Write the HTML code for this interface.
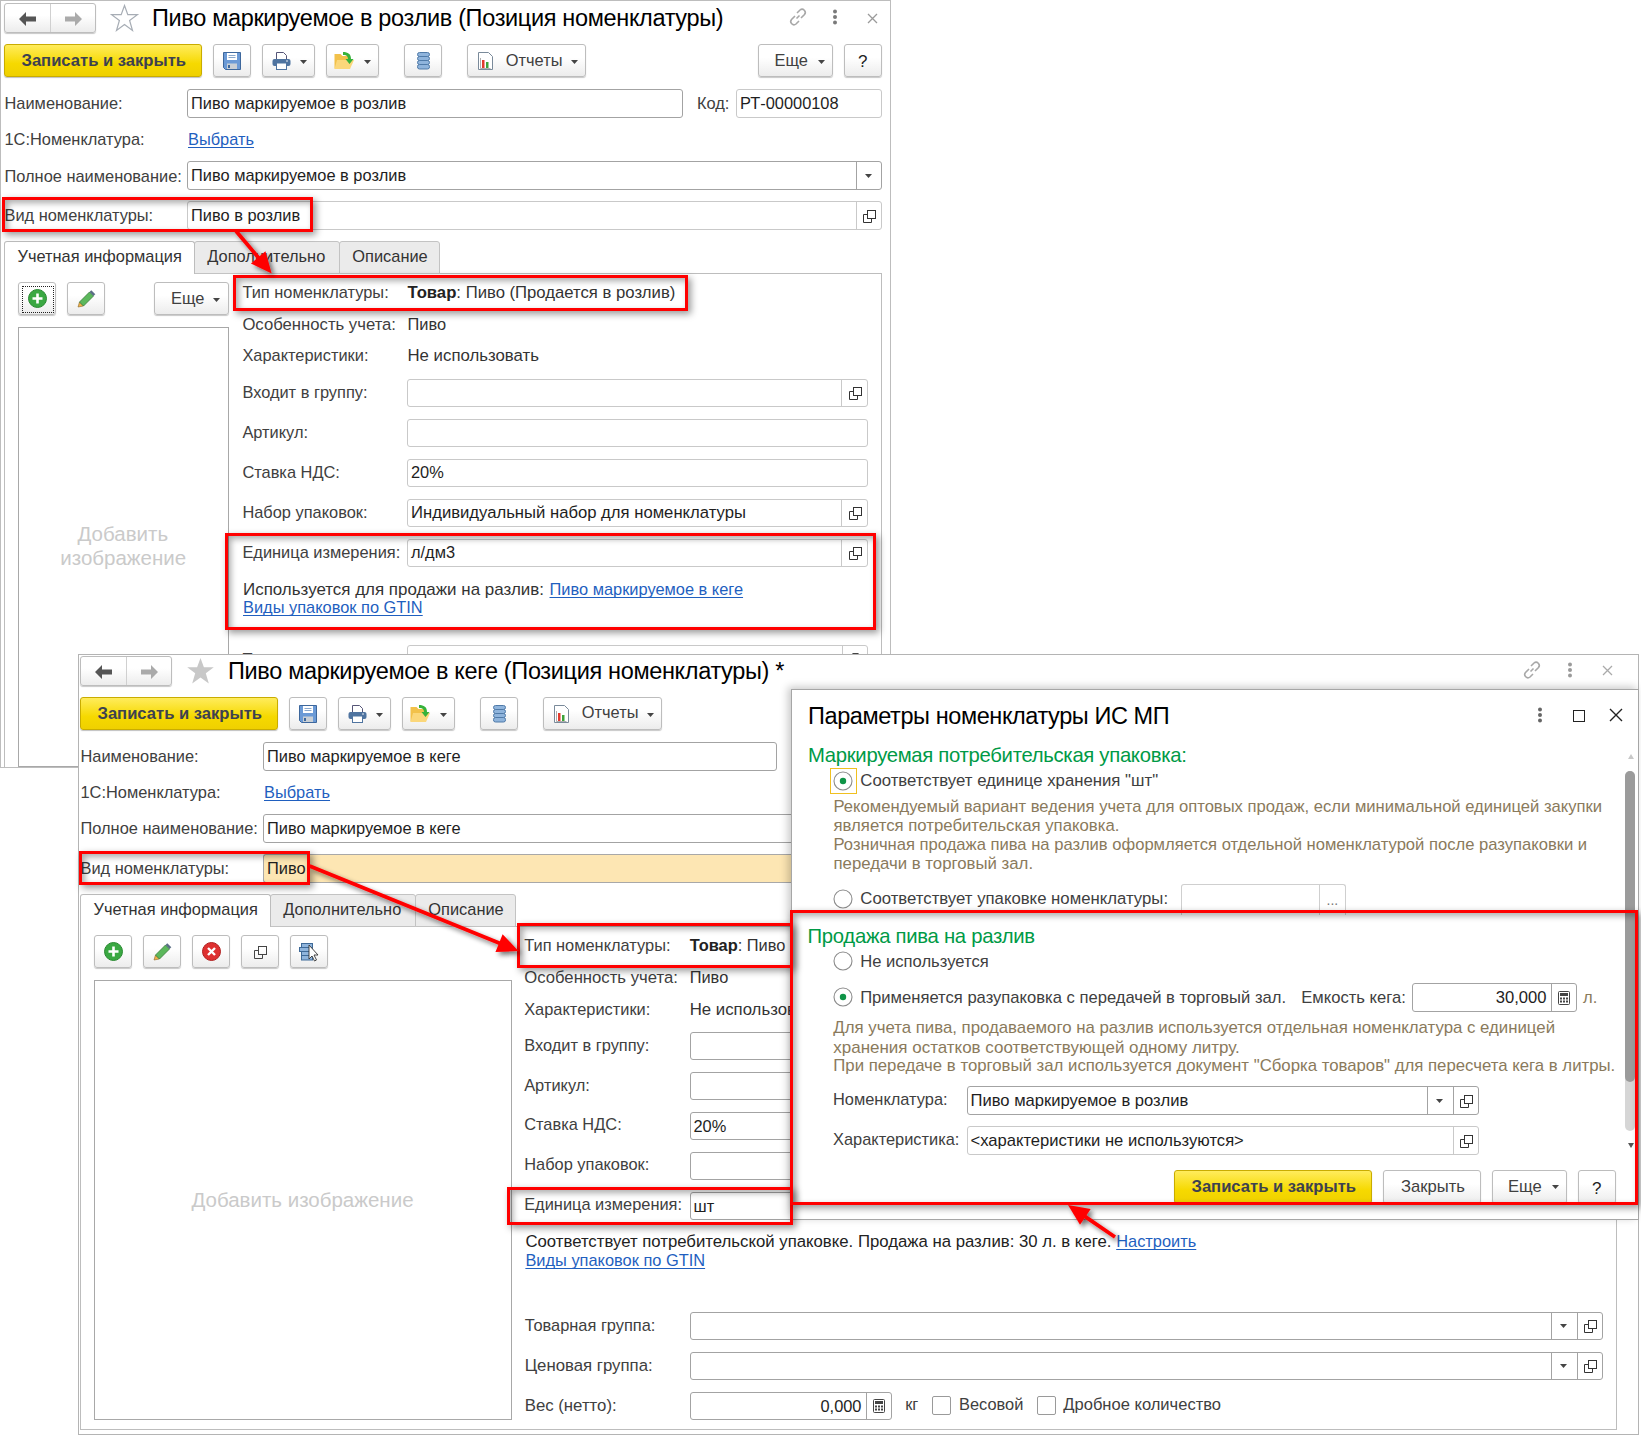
<!DOCTYPE html>
<html><head><meta charset="utf-8"><style>
html,body{margin:0;padding:0;background:#fff}
body{width:1641px;height:1438px;position:relative;overflow:hidden;font-family:"Liberation Sans",sans-serif}
.t{position:absolute;white-space:nowrap;line-height:1}
.b{position:absolute}
.i{position:absolute;overflow:visible}
.rb{position:absolute;box-sizing:border-box;border:3px solid #ff0000;box-shadow:3px 3px 7px rgba(0,0,0,.4), inset 3px 3px 6px rgba(0,0,0,.33)}
</style></head><body>
<div class="b" style="left:0;top:0;width:891px;height:768px;border:1px solid #bdbdbd;box-sizing:border-box;background:#fff"></div>
<div class="b" style="left:4px;top:3px;width:92px;height:30px;border:1px solid #bdbdbd;background:linear-gradient(#ffffff 40%,#ececec);box-shadow:0 1px 1px rgba(0,0,0,.22);border-radius:3px;box-sizing:border-box;"></div>
<div class="b" style="left:50px;top:4px;width:1px;height:28px;background:#d0d0d0"></div>
<svg class="i" style="left:19px;top:12px" width="18" height="14" viewBox="0 0 18 14"><path d="M0 7L7 0v4.5h10v5H7V14z" fill="#555"/></svg>
<svg class="i" style="left:64px;top:12px" width="18" height="14" viewBox="0 0 18 14"><path d="M18 7L11 0v4.5H1v5h10V14z" fill="#aaa"/></svg>
<svg class="i" style="left:110px;top:4px" width="29" height="28" viewBox="0 0 29 28"><path d="M14.5 1.5l3.3 9.2h9.6l-7.8 5.8 2.9 10-8-5.9-8 5.9 2.9-10-7.8-5.8h9.6z" fill="none" stroke="#a7adb5" stroke-width="1.2"/></svg>
<div class="t" style="left:152px;top:7px;font-size:23.5px;color:#000;font-weight:400;letter-spacing:-0.34px">Пиво маркируемое в розлив (Позиция номенклатуры)</div>
<svg class="i" style="left:788px;top:7px" width="20" height="20" viewBox="0 0 20 20"><g fill="none" stroke="#a8a8a8" stroke-width="1.6"><path d="M8.5 11.5l3-3"/><path d="M7 9l-3.5 3.5a3.2 3.2 0 0 0 4.5 4.5L11 14"/><path d="M13 11l3.5-3.5a3.2 3.2 0 0 0-4.5-4.5L9 6"/></g></svg>
<svg class="i" style="left:832px;top:9px" width="6" height="16" viewBox="0 0 6 16"><g fill="#7a7a7a"><circle cx="3" cy="2.5" r="2"/><circle cx="3" cy="8" r="2"/><circle cx="3" cy="13.5" r="2"/></g></svg>
<svg class="i" style="left:867px;top:12.5px" width="11" height="11" viewBox="0 0 11 11"><path d="M1 1l9 9M10 1l-9 9" stroke="#9a9a9a" stroke-width="1.3"/></svg>
<div class="b" style="left:4px;top:44px;width:198px;height:33px;border:1px solid #c9ac00;background:linear-gradient(#ffec5c,#f6d900 60%,#efd000);box-shadow:0 1px 1px rgba(0,0,0,.25);border-radius:3px;box-sizing:border-box;"></div>
<div class="t" style="left:21.5px;top:53px;font-size:16.6px;color:#3d4150;font-weight:700;">Записать и закрыть</div>
<div class="b" style="left:213px;top:44px;width:38px;height:33px;border:1px solid #bdbdbd;background:linear-gradient(#ffffff 40%,#ececec);box-shadow:0 1px 1px rgba(0,0,0,.22);border-radius:3px;box-sizing:border-box;"></div>
<svg class="i" style="left:223px;top:52px" width="18" height="18" viewBox="0 0 18 18"><path d="M0.5 0.5h17v17H2.5l-2-2z" fill="#6b9ad6" stroke="#3d679c"/><rect x="4" y="1" width="10" height="7" fill="#fff"/><path d="M5.5 3.5h7M5.5 5.5h7" stroke="#8aa8cc"/><rect x="4" y="11.5" width="10" height="5.5" fill="#c9cfd5"/><rect x="5" y="13" width="2" height="3" fill="#3d679c"/></svg>
<div class="b" style="left:262px;top:44px;width:53px;height:33px;border:1px solid #bdbdbd;background:linear-gradient(#ffffff 40%,#ececec);box-shadow:0 1px 1px rgba(0,0,0,.22);border-radius:3px;box-sizing:border-box;"></div>
<svg class="i" style="left:272px;top:52px" width="19" height="18" viewBox="0 0 19 18"><path d="M4.5 0.5h7l3 3v4h-10z" fill="#fff" stroke="#557"/><rect x="0.5" y="7" width="18" height="7" rx="2" fill="#4f74a0"/><rect x="4.5" y="11" width="10" height="6.5" fill="#fff" stroke="#4f74a0"/><circle cx="15" cy="9" r="0.8" fill="#fff"/></svg>
<svg class="i" style="left:300.0px;top:59.5px" width="7" height="4" viewBox="0 0 7 4"><path d="M0 0h7L3.5 4z" fill="#444"/></svg>
<div class="b" style="left:326px;top:44px;width:53px;height:33px;border:1px solid #bdbdbd;background:linear-gradient(#ffffff 40%,#ececec);box-shadow:0 1px 1px rgba(0,0,0,.22);border-radius:3px;box-sizing:border-box;"></div>
<svg class="i" style="left:334px;top:51px" width="21" height="20" viewBox="0 0 21 20"><path d="M0.5 3h6l2 2h7v12.5H0.5z" fill="#f2c14a"/><path d="M3 9h17l-4 9H0.5z" fill="#fbd77a"/><path d="M9 1c5 0 8 2 8 7h2.5l-4 5-4-5H14c0-3-2-4.5-5-4z" fill="#37b23a"/></svg>
<svg class="i" style="left:363.5px;top:59.5px" width="7" height="4" viewBox="0 0 7 4"><path d="M0 0h7L3.5 4z" fill="#444"/></svg>
<div class="b" style="left:404px;top:44px;width:38px;height:33px;border:1px solid #bdbdbd;background:linear-gradient(#ffffff 40%,#ececec);box-shadow:0 1px 1px rgba(0,0,0,.22);border-radius:3px;box-sizing:border-box;"></div>
<svg class="i" style="left:417px;top:52px" width="13" height="18" viewBox="0 0 13 18"><g fill="#8fb4dc" stroke="#4f7aa8"><rect x="0.5" y="0.5" width="12" height="4" rx="2"/><rect x="0.5" y="4.5" width="12" height="4" rx="2"/><rect x="0.5" y="8.5" width="12" height="4" rx="2"/><rect x="0.5" y="12.5" width="12" height="4.5" rx="2"/></g></svg>
<div class="b" style="left:467px;top:44px;width:119px;height:33px;border:1px solid #bdbdbd;background:linear-gradient(#ffffff 40%,#ececec);box-shadow:0 1px 1px rgba(0,0,0,.22);border-radius:3px;box-sizing:border-box;"></div>
<svg class="i" style="left:478px;top:52px" width="15" height="18" viewBox="0 0 15 18"><path d="M0.5 0.5h10l4 4v13h-14z" fill="#fff" stroke="#7a8a9a"/><rect x="4" y="8" width="2.5" height="8" fill="#e23b2e"/><rect x="8" y="10" width="2.5" height="6" fill="#3da33a"/><path d="M2.5 6v10.5h10" fill="none" stroke="#999" stroke-width="0.8"/></svg>
<div class="t" style="left:505.8px;top:52px;font-size:16.4px;color:#404040;font-weight:400;">Отчеты</div>
<svg class="i" style="left:571.0px;top:59.5px" width="7" height="4" viewBox="0 0 7 4"><path d="M0 0h7L3.5 4z" fill="#444"/></svg>
<div class="b" style="left:758px;top:44px;width:75px;height:33px;border:1px solid #bdbdbd;background:linear-gradient(#ffffff 40%,#ececec);box-shadow:0 1px 1px rgba(0,0,0,.22);border-radius:3px;box-sizing:border-box;"></div>
<div class="t" style="left:774.5px;top:52px;font-size:16.4px;color:#404040;font-weight:400;">Еще</div>
<svg class="i" style="left:817.5px;top:59.5px" width="7" height="4" viewBox="0 0 7 4"><path d="M0 0h7L3.5 4z" fill="#444"/></svg>
<div class="b" style="left:844px;top:44px;width:38px;height:33px;border:1px solid #bdbdbd;background:linear-gradient(#ffffff 40%,#ececec);box-shadow:0 1px 1px rgba(0,0,0,.22);border-radius:3px;box-sizing:border-box;"></div>
<div class="t" style="left:858px;top:53px;font-size:17px;color:#222;font-weight:400;">?</div>
<div class="t" style="left:4.5px;top:95px;font-size:16.4px;color:#404040;font-weight:400;">Наименование:</div>
<div class="b" style="left:187px;top:89px;width:496px;height:29px;border:1px solid #a3a3a3;border-radius:3px;background:#fff;box-sizing:border-box"></div>
<div class="t" style="left:191px;top:95px;font-size:16.4px;color:#1e1e1e;font-weight:400;">Пиво маркируемое в розлив</div>
<div class="t" style="left:697px;top:95px;font-size:16.4px;color:#404040;font-weight:400;">Код:</div>
<div class="b" style="left:736px;top:89px;width:146px;height:29px;border:1px solid #c9c9c9;border-radius:3px;background:#fff;box-sizing:border-box"></div>
<div class="t" style="left:740px;top:95px;font-size:16.4px;color:#1e1e1e;font-weight:400;">РТ-00000108</div>
<div class="t" style="left:4.5px;top:131px;font-size:16.4px;color:#404040;font-weight:400;">1С:Номенклатура:</div>
<div class="t" style="left:188px;top:131px;font-size:16.4px;color:#1f5fbf;font-weight:400;text-decoration:underline;text-decoration-skip-ink:none;text-underline-offset:1.5px">Выбрать</div>
<div class="t" style="left:4.5px;top:168px;font-size:16.4px;color:#404040;font-weight:400;">Полное наименование:</div>
<div class="b" style="left:187px;top:161px;width:695px;height:29px;border:1px solid #a3a3a3;border-radius:3px;background:#fff;box-sizing:border-box"></div>
<div class="b" style="left:855.5px;top:162px;width:1.0px;height:27px;background:#a3a3a3"></div>
<svg class="i" style="left:865.25px;top:173.5px" width="7" height="4" viewBox="0 0 7 4"><path d="M0 0h7L3.5 4z" fill="#444"/></svg>
<div class="t" style="left:191px;top:167px;font-size:16.4px;color:#1e1e1e;font-weight:400;">Пиво маркируемое в розлив</div>
<div class="t" style="left:4.5px;top:207px;font-size:16.4px;color:#404040;font-weight:400;">Вид номенклатуры:</div>
<div class="b" style="left:187px;top:201px;width:695px;height:29px;border:1px solid #c9c9c9;border-radius:3px;background:#fff;box-sizing:border-box"></div>
<div class="b" style="left:855.5px;top:202px;width:1.0px;height:27px;background:#c9c9c9"></div>
<svg class="i" style="left:862.75px;top:209.5px" width="13" height="13" viewBox="0 0 13 13"><path d="M4.5 4.5h8v-8" fill="none"/><rect x="4.5" y="0.5" width="8" height="8" fill="none" stroke="#333"/><path d="M4.5 4.5H0.5v8h8V8.5" fill="none" stroke="#333"/></svg>
<div class="t" style="left:191px;top:207px;font-size:16.4px;color:#1e1e1e;font-weight:400;">Пиво в розлив</div>
<div class="b" style="left:4px;top:273px;width:878px;height:495px;border:1px solid #bdbdbd;box-sizing:border-box;background:#fff"></div>
<div class="b" style="left:194px;top:241px;width:146px;height:33px;border:1px solid #c3c3c3;border-radius:3px 3px 0 0;background:#ebebeb;box-sizing:border-box"></div>
<div class="b" style="left:339px;top:241px;width:101px;height:33px;border:1px solid #c3c3c3;border-radius:3px 3px 0 0;background:#ebebeb;box-sizing:border-box"></div>
<div class="b" style="left:4px;top:241px;width:191px;height:33px;border:1px solid #bdbdbd;border-bottom:none;border-radius:3px 3px 0 0;background:#fff;box-sizing:border-box"></div>
<div class="t" style="left:17.5px;top:248px;font-size:16.4px;color:#333;font-weight:400;">Учетная информация</div>
<div class="t" style="left:207.3px;top:248px;font-size:16.4px;color:#333;font-weight:400;">Дополнительно</div>
<div class="t" style="left:352.3px;top:248px;font-size:16.4px;color:#333;font-weight:400;">Описание</div>
<div class="b" style="left:18px;top:282px;width:38px;height:33px;border:1px solid #bdbdbd;background:linear-gradient(#ffffff 40%,#ececec);box-shadow:0 1px 1px rgba(0,0,0,.22);border-radius:3px;box-sizing:border-box;"></div>
<div class="b" style="left:22px;top:286px;width:30px;height:25px;border:1px dotted #222"></div>
<svg class="i" style="left:27.5px;top:289.0px" width="19" height="19" viewBox="0 0 19 19"><circle cx="9.5" cy="9.5" r="9" fill="#3aa842" stroke="#2a8a32"/><path d="M9.5 4.5v10M4.5 9.5h10" stroke="#fff" stroke-width="2.6"/></svg>
<div class="b" style="left:67px;top:282px;width:38px;height:33px;border:1px solid #bdbdbd;background:linear-gradient(#ffffff 40%,#ececec);box-shadow:0 1px 1px rgba(0,0,0,.22);border-radius:3px;box-sizing:border-box;"></div>
<svg class="i" style="left:77px;top:289.5px" width="18" height="18" viewBox="0 0 18 18"><path d="M1 17l1.5-5 4 4z" fill="#f0b04a" stroke="#8a6a2a" stroke-width="0.6"/><path d="M2.5 12L12.5 2l4 4-10 10z" fill="#5cb85c" stroke="#3a7a3a" stroke-width="0.8"/><path d="M12.5 2l1.8-1.8 4 4L16.5 6z" fill="#5a6e85"/></svg>
<div class="b" style="left:154px;top:282px;width:75px;height:33px;border:1px solid #bdbdbd;background:linear-gradient(#ffffff 40%,#ececec);box-shadow:0 1px 1px rgba(0,0,0,.22);border-radius:3px;box-sizing:border-box;"></div>
<div class="t" style="left:171px;top:290px;font-size:16.4px;color:#404040;font-weight:400;">Еще</div>
<svg class="i" style="left:213.0px;top:297.5px" width="7" height="4" viewBox="0 0 7 4"><path d="M0 0h7L3.5 4z" fill="#444"/></svg>
<div class="b" style="left:18px;top:327px;width:211px;height:440px;border:1px solid #a8a8a8;box-sizing:border-box;background:#fff"></div>
<div class="t" style="left:77.5px;top:524px;font-size:20.5px;color:#cacaca;font-weight:400;">Добавить</div>
<div class="t" style="left:60.3px;top:548px;font-size:20.5px;color:#cacaca;font-weight:400;">изображение</div>
<div class="t" style="left:242.4px;top:284px;font-size:16.4px;color:#404040;font-weight:400;">Тип номенклатуры:</div>
<div class="t" style="left:407.5px;top:285px;font-size:16.7px;color:#333;font-weight:400;"><b style='color:#222'>Товар</b>: Пиво (Продается в розлив)</div>
<div class="t" style="left:242.4px;top:317px;font-size:16.7px;color:#404040;font-weight:400;">Особенность учета:</div>
<div class="t" style="left:407.5px;top:316px;font-size:16.4px;color:#333;font-weight:400;">Пиво</div>
<div class="t" style="left:242.4px;top:347px;font-size:16.4px;color:#404040;font-weight:400;">Характеристики:</div>
<div class="t" style="left:407.5px;top:348px;font-size:16.8px;color:#333;font-weight:400;">Не использовать</div>
<div class="t" style="left:242.4px;top:384px;font-size:16.4px;color:#404040;font-weight:400;">Входит в группу:</div>
<div class="b" style="left:407px;top:378.5px;width:461px;height:28.5px;border:1px solid #c9c9c9;border-radius:3px;background:#fff;box-sizing:border-box"></div>
<div class="b" style="left:841px;top:379.5px;width:1px;height:26.5px;background:#c9c9c9"></div>
<svg class="i" style="left:848.5px;top:386.75px" width="13" height="13" viewBox="0 0 13 13"><path d="M4.5 4.5h8v-8" fill="none"/><rect x="4.5" y="0.5" width="8" height="8" fill="none" stroke="#333"/><path d="M4.5 4.5H0.5v8h8V8.5" fill="none" stroke="#333"/></svg>
<div class="t" style="left:242.4px;top:424px;font-size:16.4px;color:#404040;font-weight:400;">Артикул:</div>
<div class="b" style="left:407px;top:418.5px;width:461px;height:28.5px;border:1px solid #c9c9c9;border-radius:3px;background:#fff;box-sizing:border-box"></div>
<div class="t" style="left:242.4px;top:464px;font-size:16.4px;color:#404040;font-weight:400;">Ставка НДС:</div>
<div class="b" style="left:407px;top:458.5px;width:461px;height:28.5px;border:1px solid #c9c9c9;border-radius:3px;background:#fff;box-sizing:border-box"></div>
<div class="t" style="left:411px;top:464px;font-size:16.4px;color:#1e1e1e;font-weight:400;">20%</div>
<div class="t" style="left:242.4px;top:504px;font-size:16.4px;color:#404040;font-weight:400;">Набор упаковок:</div>
<div class="b" style="left:407px;top:498.5px;width:461px;height:28.5px;border:1px solid #c9c9c9;border-radius:3px;background:#fff;box-sizing:border-box"></div>
<div class="b" style="left:841px;top:499.5px;width:1px;height:26.5px;background:#c9c9c9"></div>
<svg class="i" style="left:848.5px;top:506.75px" width="13" height="13" viewBox="0 0 13 13"><path d="M4.5 4.5h8v-8" fill="none"/><rect x="4.5" y="0.5" width="8" height="8" fill="none" stroke="#333"/><path d="M4.5 4.5H0.5v8h8V8.5" fill="none" stroke="#333"/></svg>
<div class="t" style="left:411px;top:505px;font-size:16.66px;color:#1e1e1e;font-weight:400;">Индивидуальный набор для номенклатуры</div>
<div class="t" style="left:242.4px;top:544px;font-size:16.4px;color:#404040;font-weight:400;">Единица измерения:</div>
<div class="b" style="left:407px;top:538.5px;width:461px;height:28.5px;border:1px solid #c9c9c9;border-radius:3px;background:#fff;box-sizing:border-box"></div>
<div class="b" style="left:841px;top:539.5px;width:1px;height:26.5px;background:#c9c9c9"></div>
<svg class="i" style="left:848.5px;top:546.75px" width="13" height="13" viewBox="0 0 13 13"><path d="M4.5 4.5h8v-8" fill="none"/><rect x="4.5" y="0.5" width="8" height="8" fill="none" stroke="#333"/><path d="M4.5 4.5H0.5v8h8V8.5" fill="none" stroke="#333"/></svg>
<div class="t" style="left:411px;top:544px;font-size:16.4px;color:#1e1e1e;font-weight:400;">л/дм3</div>
<div class="t" style="left:243px;top:582px;font-size:16.95px;color:#333;font-weight:400;">Используется для продажи на разлив:</div>
<div class="t" style="left:549.5px;top:581px;font-size:16.4px;color:#1f5fbf;font-weight:400;text-decoration:underline;text-decoration-skip-ink:none;text-underline-offset:1.5px">Пиво маркируемое в кеге</div>
<div class="t" style="left:243px;top:599px;font-size:16.4px;color:#1f5fbf;font-weight:400;text-decoration:underline;text-decoration-skip-ink:none;text-underline-offset:1.5px">Виды упаковок по GTIN</div>
<div class="b" style="left:407px;top:645px;width:461px;height:35px;border:1px solid #c9c9c9;border-radius:3px;background:#fff;box-sizing:border-box"></div>
<div class="b" style="left:842px;top:646px;width:1px;height:33px;background:#c9c9c9"></div>
<svg class="i" style="left:852.0px;top:653px" width="7" height="4" viewBox="0 0 7 4"><path d="M0 0h7L3.5 4z" fill="#444"/></svg>
<div class="t" style="left:242.4px;top:651px;font-size:16.4px;color:#404040;font-weight:400;">Товарная группа:</div>
<div class="b" style="left:78px;top:654px;width:1561px;height:781px;border:1px solid #b4b4b4;box-sizing:border-box;background:#fff"></div>
<div class="b" style="left:80px;top:656px;width:92px;height:30px;border:1px solid #bdbdbd;background:linear-gradient(#ffffff 40%,#ececec);box-shadow:0 1px 1px rgba(0,0,0,.22);border-radius:3px;box-sizing:border-box;"></div>
<div class="b" style="left:126px;top:657px;width:1px;height:28px;background:#d0d0d0"></div>
<svg class="i" style="left:95px;top:665px" width="18" height="14" viewBox="0 0 18 14"><path d="M0 7L7 0v4.5h10v5H7V14z" fill="#555"/></svg>
<svg class="i" style="left:140px;top:665px" width="18" height="14" viewBox="0 0 18 14"><path d="M18 7L11 0v4.5H1v5h10V14z" fill="#aaa"/></svg>
<svg class="i" style="left:186px;top:657px" width="29" height="28" viewBox="0 0 29 28"><path d="M14.5 1l3.4 9.3h9.9l-8 5.9 3 10.3-8.3-6.1-8.3 6.1 3-10.3-8-5.9h9.9z" fill="#c8c8c8"/></svg>
<div class="t" style="left:228px;top:660px;font-size:23.5px;color:#000;font-weight:400;letter-spacing:-0.34px">Пиво маркируемое в кеге (Позиция номенклатуры) *</div>
<svg class="i" style="left:1522px;top:660px" width="20" height="20" viewBox="0 0 20 20"><g fill="none" stroke="#a8a8a8" stroke-width="1.6"><path d="M8.5 11.5l3-3"/><path d="M7 9l-3.5 3.5a3.2 3.2 0 0 0 4.5 4.5L11 14"/><path d="M13 11l3.5-3.5a3.2 3.2 0 0 0-4.5-4.5L9 6"/></g></svg>
<svg class="i" style="left:1567px;top:662px" width="6" height="16" viewBox="0 0 6 16"><g fill="#9a9a9a"><circle cx="3" cy="2.5" r="2"/><circle cx="3" cy="8" r="2"/><circle cx="3" cy="13.5" r="2"/></g></svg>
<svg class="i" style="left:1602px;top:665px" width="11" height="11" viewBox="0 0 11 11"><path d="M1 1l9 9M10 1l-9 9" stroke="#aaa" stroke-width="1.3"/></svg>
<div class="b" style="left:80px;top:697px;width:198px;height:33px;border:1px solid #c9ac00;background:linear-gradient(#ffec5c,#f6d900 60%,#efd000);box-shadow:0 1px 1px rgba(0,0,0,.25);border-radius:3px;box-sizing:border-box;"></div>
<div class="t" style="left:97.5px;top:706px;font-size:16.6px;color:#3d4150;font-weight:700;">Записать и закрыть</div>
<div class="b" style="left:289px;top:697px;width:38px;height:33px;border:1px solid #bdbdbd;background:linear-gradient(#ffffff 40%,#ececec);box-shadow:0 1px 1px rgba(0,0,0,.22);border-radius:3px;box-sizing:border-box;"></div>
<svg class="i" style="left:299px;top:705px" width="18" height="18" viewBox="0 0 18 18"><path d="M0.5 0.5h17v17H2.5l-2-2z" fill="#6b9ad6" stroke="#3d679c"/><rect x="4" y="1" width="10" height="7" fill="#fff"/><path d="M5.5 3.5h7M5.5 5.5h7" stroke="#8aa8cc"/><rect x="4" y="11.5" width="10" height="5.5" fill="#c9cfd5"/><rect x="5" y="13" width="2" height="3" fill="#3d679c"/></svg>
<div class="b" style="left:338px;top:697px;width:53px;height:33px;border:1px solid #bdbdbd;background:linear-gradient(#ffffff 40%,#ececec);box-shadow:0 1px 1px rgba(0,0,0,.22);border-radius:3px;box-sizing:border-box;"></div>
<svg class="i" style="left:348px;top:705px" width="19" height="18" viewBox="0 0 19 18"><path d="M4.5 0.5h7l3 3v4h-10z" fill="#fff" stroke="#557"/><rect x="0.5" y="7" width="18" height="7" rx="2" fill="#4f74a0"/><rect x="4.5" y="11" width="10" height="6.5" fill="#fff" stroke="#4f74a0"/><circle cx="15" cy="9" r="0.8" fill="#fff"/></svg>
<svg class="i" style="left:376.0px;top:712.5px" width="7" height="4" viewBox="0 0 7 4"><path d="M0 0h7L3.5 4z" fill="#444"/></svg>
<div class="b" style="left:402px;top:697px;width:53px;height:33px;border:1px solid #bdbdbd;background:linear-gradient(#ffffff 40%,#ececec);box-shadow:0 1px 1px rgba(0,0,0,.22);border-radius:3px;box-sizing:border-box;"></div>
<svg class="i" style="left:410px;top:704px" width="21" height="20" viewBox="0 0 21 20"><path d="M0.5 3h6l2 2h7v12.5H0.5z" fill="#f2c14a"/><path d="M3 9h17l-4 9H0.5z" fill="#fbd77a"/><path d="M9 1c5 0 8 2 8 7h2.5l-4 5-4-5H14c0-3-2-4.5-5-4z" fill="#37b23a"/></svg>
<svg class="i" style="left:439.5px;top:712.5px" width="7" height="4" viewBox="0 0 7 4"><path d="M0 0h7L3.5 4z" fill="#444"/></svg>
<div class="b" style="left:480px;top:697px;width:38px;height:33px;border:1px solid #bdbdbd;background:linear-gradient(#ffffff 40%,#ececec);box-shadow:0 1px 1px rgba(0,0,0,.22);border-radius:3px;box-sizing:border-box;"></div>
<svg class="i" style="left:493px;top:705px" width="13" height="18" viewBox="0 0 13 18"><g fill="#8fb4dc" stroke="#4f7aa8"><rect x="0.5" y="0.5" width="12" height="4" rx="2"/><rect x="0.5" y="4.5" width="12" height="4" rx="2"/><rect x="0.5" y="8.5" width="12" height="4" rx="2"/><rect x="0.5" y="12.5" width="12" height="4.5" rx="2"/></g></svg>
<div class="b" style="left:543px;top:697px;width:119px;height:33px;border:1px solid #bdbdbd;background:linear-gradient(#ffffff 40%,#ececec);box-shadow:0 1px 1px rgba(0,0,0,.22);border-radius:3px;box-sizing:border-box;"></div>
<svg class="i" style="left:554px;top:705px" width="15" height="18" viewBox="0 0 15 18"><path d="M0.5 0.5h10l4 4v13h-14z" fill="#fff" stroke="#7a8a9a"/><rect x="4" y="8" width="2.5" height="8" fill="#e23b2e"/><rect x="8" y="10" width="2.5" height="6" fill="#3da33a"/><path d="M2.5 6v10.5h10" fill="none" stroke="#999" stroke-width="0.8"/></svg>
<div class="t" style="left:581.8px;top:704px;font-size:16.4px;color:#404040;font-weight:400;">Отчеты</div>
<svg class="i" style="left:647.0px;top:712.5px" width="7" height="4" viewBox="0 0 7 4"><path d="M0 0h7L3.5 4z" fill="#444"/></svg>
<div class="t" style="left:80.5px;top:748px;font-size:16.4px;color:#404040;font-weight:400;">Наименование:</div>
<div class="b" style="left:263px;top:742px;width:514px;height:29px;border:1px solid #a3a3a3;border-radius:3px;background:#fff;box-sizing:border-box"></div>
<div class="t" style="left:267px;top:748px;font-size:16.4px;color:#1e1e1e;font-weight:400;">Пиво маркируемое в кеге</div>
<div class="t" style="left:80.5px;top:784px;font-size:16.4px;color:#404040;font-weight:400;">1С:Номенклатура:</div>
<div class="t" style="left:264px;top:784px;font-size:16.4px;color:#1f5fbf;font-weight:400;text-decoration:underline;text-decoration-skip-ink:none;text-underline-offset:1.5px">Выбрать</div>
<div class="t" style="left:80.5px;top:820px;font-size:16.4px;color:#404040;font-weight:400;">Полное наименование:</div>
<div class="b" style="left:263px;top:814px;width:537px;height:29px;border:1px solid #a3a3a3;border-radius:3px;background:#fff;box-sizing:border-box"></div>
<div class="t" style="left:267px;top:820px;font-size:16.4px;color:#1e1e1e;font-weight:400;">Пиво маркируемое в кеге</div>
<div class="t" style="left:80.5px;top:860px;font-size:16.4px;color:#404040;font-weight:400;">Вид номенклатуры:</div>
<div class="b" style="left:263px;top:854px;width:537px;height:29px;border:1px solid #a8a8a8;border-right:none;border-radius:3px 0 0 3px;background:#fde6b3;box-sizing:border-box"></div>
<div class="t" style="left:267px;top:860px;font-size:16.4px;color:#1e1e1e;font-weight:400;">Пиво</div>
<div class="b" style="left:80px;top:926px;width:1537px;height:504px;border:1px solid #bdbdbd;box-sizing:border-box;background:#fff"></div>
<div class="b" style="left:270px;top:894px;width:146px;height:33px;border:1px solid #c3c3c3;border-radius:3px 3px 0 0;background:#ebebeb;box-sizing:border-box"></div>
<div class="b" style="left:415px;top:894px;width:101px;height:33px;border:1px solid #c3c3c3;border-radius:3px 3px 0 0;background:#ebebeb;box-sizing:border-box"></div>
<div class="b" style="left:80px;top:894px;width:191px;height:33px;border:1px solid #bdbdbd;border-bottom:none;border-radius:3px 3px 0 0;background:#fff;box-sizing:border-box"></div>
<div class="t" style="left:93.5px;top:901px;font-size:16.4px;color:#333;font-weight:400;">Учетная информация</div>
<div class="t" style="left:283.3px;top:901px;font-size:16.4px;color:#333;font-weight:400;">Дополнительно</div>
<div class="t" style="left:428.3px;top:901px;font-size:16.4px;color:#333;font-weight:400;">Описание</div>
<div class="b" style="left:94px;top:935px;width:38px;height:33px;border:1px solid #bdbdbd;background:linear-gradient(#ffffff 40%,#ececec);box-shadow:0 1px 1px rgba(0,0,0,.22);border-radius:3px;box-sizing:border-box;"></div>
<svg class="i" style="left:103.5px;top:942.0px" width="19" height="19" viewBox="0 0 19 19"><circle cx="9.5" cy="9.5" r="9" fill="#3aa842" stroke="#2a8a32"/><path d="M9.5 4.5v10M4.5 9.5h10" stroke="#fff" stroke-width="2.6"/></svg>
<div class="b" style="left:143px;top:935px;width:38px;height:33px;border:1px solid #bdbdbd;background:linear-gradient(#ffffff 40%,#ececec);box-shadow:0 1px 1px rgba(0,0,0,.22);border-radius:3px;box-sizing:border-box;"></div>
<svg class="i" style="left:153px;top:942.5px" width="18" height="18" viewBox="0 0 18 18"><path d="M1 17l1.5-5 4 4z" fill="#f0b04a" stroke="#8a6a2a" stroke-width="0.6"/><path d="M2.5 12L12.5 2l4 4-10 10z" fill="#5cb85c" stroke="#3a7a3a" stroke-width="0.8"/><path d="M12.5 2l1.8-1.8 4 4L16.5 6z" fill="#5a6e85"/></svg>
<div class="b" style="left:192px;top:935px;width:38px;height:33px;border:1px solid #bdbdbd;background:linear-gradient(#ffffff 40%,#ececec);box-shadow:0 1px 1px rgba(0,0,0,.22);border-radius:3px;box-sizing:border-box;"></div>
<svg class="i" style="left:201.5px;top:942.0px" width="19" height="19" viewBox="0 0 19 19"><circle cx="9.5" cy="9.5" r="9" fill="#de3030" stroke="#b02020"/><path d="M6 6l7 7M13 6l-7 7" stroke="#fff" stroke-width="2.4"/></svg>
<div class="b" style="left:241px;top:935px;width:38px;height:33px;border:1px solid #bdbdbd;background:linear-gradient(#ffffff 40%,#ececec);box-shadow:0 1px 1px rgba(0,0,0,.22);border-radius:3px;box-sizing:border-box;"></div>
<svg class="i" style="left:254px;top:945.5px" width="13" height="13" viewBox="0 0 13 13"><path d="M4.5 4.5h8v-8" fill="none"/><rect x="4.5" y="0.5" width="8" height="8" fill="none" stroke="#444"/><path d="M4.5 4.5H0.5v8h8V8.5" fill="none" stroke="#444"/></svg>
<div class="b" style="left:290px;top:935px;width:38px;height:33px;border:1px solid #bdbdbd;background:linear-gradient(#ffffff 40%,#ececec);box-shadow:0 1px 1px rgba(0,0,0,.22);border-radius:3px;box-sizing:border-box;"></div>
<svg class="i" style="left:299px;top:941.5px" width="21" height="20" viewBox="0 0 21 20"><g fill="#8fb4dc" stroke="#3f6a98"><rect x="2.5" y="1.5" width="11" height="4"/><rect x="0.5" y="5.5" width="13" height="4"/><rect x="2.5" y="9.5" width="11" height="4"/><rect x="2.5" y="13.5" width="11" height="4.5"/></g><path d="M10 3v14l3-3 2.5 5 2-1-2.5-5h4z" fill="#fff" stroke="#333" stroke-width="0.9"/></svg>
<div class="b" style="left:94px;top:980px;width:418px;height:440px;border:1px solid #a8a8a8;box-sizing:border-box;background:#fff"></div>
<div class="t" style="left:191.4px;top:1190px;font-size:20.5px;color:#cacaca;font-weight:400;">Добавить изображение</div>
<div class="t" style="left:524.2px;top:937px;font-size:16.4px;color:#404040;font-weight:400;">Тип номенклатуры:</div>
<div class="t" style="left:689.7px;top:937px;font-size:16.4px;color:#333;font-weight:400;"><b style='color:#222'>Товар</b>: Пиво</div>
<div class="t" style="left:524.2px;top:970px;font-size:16.7px;color:#404040;font-weight:400;">Особенность учета:</div>
<div class="t" style="left:689.7px;top:969px;font-size:16.4px;color:#333;font-weight:400;">Пиво</div>
<div class="t" style="left:524.2px;top:1001px;font-size:16.4px;color:#404040;font-weight:400;">Характеристики:</div>
<div class="t" style="left:689.7px;top:1002px;font-size:16.8px;color:#333;font-weight:400;">Не использовать</div>
<div class="t" style="left:524.2px;top:1037px;font-size:16.4px;color:#404040;font-weight:400;">Входит в группу:</div>
<div class="b" style="left:689.5px;top:1031.5px;width:130.5px;height:28.5px;border:1px solid #a3a3a3;border-radius:3px;background:#fff;box-sizing:border-box"></div>
<div class="t" style="left:524.2px;top:1077px;font-size:16.4px;color:#404040;font-weight:400;">Артикул:</div>
<div class="b" style="left:689.5px;top:1071.5px;width:130.5px;height:28.5px;border:1px solid #a3a3a3;border-radius:3px;background:#fff;box-sizing:border-box"></div>
<div class="t" style="left:524.2px;top:1116px;font-size:16.4px;color:#404040;font-weight:400;">Ставка НДС:</div>
<div class="b" style="left:689.5px;top:1111.5px;width:130.5px;height:28.5px;border:1px solid #a3a3a3;border-radius:3px;background:#fff;box-sizing:border-box"></div>
<div class="t" style="left:693.5px;top:1118px;font-size:16.4px;color:#1e1e1e;font-weight:400;">20%</div>
<div class="t" style="left:524.2px;top:1156px;font-size:16.4px;color:#404040;font-weight:400;">Набор упаковок:</div>
<div class="b" style="left:689.5px;top:1151.5px;width:130.5px;height:28.5px;border:1px solid #a3a3a3;border-radius:3px;background:#fff;box-sizing:border-box"></div>
<div class="t" style="left:524.2px;top:1196px;font-size:16.4px;color:#404040;font-weight:400;">Единица измерения:</div>
<div class="b" style="left:689.5px;top:1191.5px;width:130.5px;height:28.5px;border:1px solid #a3a3a3;border-radius:3px;background:#fff;box-sizing:border-box"></div>
<div class="t" style="left:693.5px;top:1198px;font-size:16.4px;color:#1e1e1e;font-weight:400;">шт</div>
<div class="t" style="left:525.4px;top:1234px;font-size:16.75px;color:#222;font-weight:400;">Соответствует потребительской упаковке. Продажа на разлив: 30 л. в кеге.</div>
<div class="t" style="left:1116.2px;top:1233px;font-size:16.4px;color:#1f5fbf;font-weight:400;text-decoration:underline;text-decoration-skip-ink:none;text-underline-offset:1.5px">Настроить</div>
<div class="t" style="left:525.4px;top:1252px;font-size:16.4px;color:#1f5fbf;font-weight:400;text-decoration:underline;text-decoration-skip-ink:none;text-underline-offset:1.5px">Виды упаковок по GTIN</div>
<div class="t" style="left:524.7px;top:1317px;font-size:16.4px;color:#404040;font-weight:400;">Товарная группа:</div>
<div class="b" style="left:689.5px;top:1311.5px;width:913.5px;height:28.5px;border:1px solid #a3a3a3;border-radius:3px;background:#fff;box-sizing:border-box"></div>
<div class="b" style="left:1550.5px;top:1312.5px;width:1.0px;height:26.5px;background:#a3a3a3"></div>
<div class="b" style="left:1576.5px;top:1312.5px;width:1.0px;height:26.5px;background:#a3a3a3"></div>
<svg class="i" style="left:1560.0px;top:1323.75px" width="7" height="4" viewBox="0 0 7 4"><path d="M0 0h7L3.5 4z" fill="#444"/></svg>
<svg class="i" style="left:1583.75px;top:1319.75px" width="13" height="13" viewBox="0 0 13 13"><path d="M4.5 4.5h8v-8" fill="none"/><rect x="4.5" y="0.5" width="8" height="8" fill="none" stroke="#333"/><path d="M4.5 4.5H0.5v8h8V8.5" fill="none" stroke="#333"/></svg>
<div class="t" style="left:524.7px;top:1358px;font-size:16.8px;color:#404040;font-weight:400;">Ценовая группа:</div>
<div class="b" style="left:689.5px;top:1351.5px;width:913.5px;height:28.5px;border:1px solid #a3a3a3;border-radius:3px;background:#fff;box-sizing:border-box"></div>
<div class="b" style="left:1550.5px;top:1352.5px;width:1.0px;height:26.5px;background:#a3a3a3"></div>
<div class="b" style="left:1576.5px;top:1352.5px;width:1.0px;height:26.5px;background:#a3a3a3"></div>
<svg class="i" style="left:1560.0px;top:1363.75px" width="7" height="4" viewBox="0 0 7 4"><path d="M0 0h7L3.5 4z" fill="#444"/></svg>
<svg class="i" style="left:1583.75px;top:1359.75px" width="13" height="13" viewBox="0 0 13 13"><path d="M4.5 4.5h8v-8" fill="none"/><rect x="4.5" y="0.5" width="8" height="8" fill="none" stroke="#333"/><path d="M4.5 4.5H0.5v8h8V8.5" fill="none" stroke="#333"/></svg>
<div class="t" style="left:524.7px;top:1398px;font-size:16.8px;color:#404040;font-weight:400;">Вес (нетто):</div>
<div class="b" style="left:689.5px;top:1391.5px;width:202.5px;height:28.5px;border:1px solid #a3a3a3;border-radius:3px;background:#fff;box-sizing:border-box"></div>
<div class="b" style="left:865.5px;top:1392.5px;width:1.0px;height:26.5px;background:#a3a3a3"></div>
<svg class="i" style="left:872.75px;top:1398.75px" width="12" height="14" viewBox="0 0 12 14"><rect x="0.5" y="0.5" width="11" height="13" rx="1" fill="none" stroke="#444"/><rect x="2" y="2" width="8" height="3" fill="#444"/><g fill="#444"><rect x="2" y="6.5" width="2" height="2"/><rect x="5" y="6.5" width="2" height="2"/><rect x="8" y="6.5" width="2" height="2"/><rect x="2" y="9.5" width="2" height="2"/><rect x="5" y="9.5" width="2" height="2"/><rect x="8" y="9.5" width="2" height="2"/></g></svg>
<div class="t" style="right:779.5px;top:1398px;font-size:16.4px;color:#1e1e1e">0,000</div>
<div class="t" style="left:905.2px;top:1396px;font-size:16.4px;color:#404040;font-weight:400;">кг</div>
<div class="b" style="left:932px;top:1396px;width:19px;height:19px;border:1px solid #9a9a9a;border-radius:2px;background:#fff;box-sizing:border-box"></div>
<div class="t" style="left:959px;top:1396px;font-size:16.4px;color:#404040;font-weight:400;">Весовой</div>
<div class="b" style="left:1037px;top:1396px;width:19px;height:19px;border:1px solid #9a9a9a;border-radius:2px;background:#fff;box-sizing:border-box"></div>
<div class="t" style="left:1063.3px;top:1397px;font-size:16.55px;color:#404040;font-weight:400;">Дробное количество</div>
<div class="b" style="left:791px;top:689px;width:848px;height:531px;border:1px solid #a6a6a6;box-sizing:border-box;background:#fff;box-shadow:-3px -2px 8px rgba(0,0,0,.22)"></div>
<div class="t" style="left:808px;top:705px;font-size:23.5px;color:#000;font-weight:400;letter-spacing:-0.41px">Параметры номенклатуры ИС МП</div>
<svg class="i" style="left:1537px;top:707px" width="6" height="16" viewBox="0 0 6 16"><g fill="#666"><circle cx="3" cy="2.5" r="2"/><circle cx="3" cy="8" r="2"/><circle cx="3" cy="13.5" r="2"/></g></svg>
<div class="b" style="left:1573px;top:710px;width:11.5px;height:11.5px;border:1.3px solid #222;box-sizing:border-box"></div>
<svg class="i" style="left:1609px;top:708px" width="14" height="14" viewBox="0 0 14 14"><path d="M1 1l12 12M13 1L1 13" stroke="#222" stroke-width="1.4"/></svg>
<div class="t" style="left:808px;top:745px;font-size:20.3px;color:#009a46;font-weight:400;letter-spacing:-0.3px">Маркируемая потребительская упаковка:</div>
<div class="b" style="left:830px;top:767.5px;width:27px;height:26.5px;border:1px solid #f0c020;box-sizing:border-box"></div>
<svg class="i" style="left:833.2px;top:770.5px" width="20" height="20" viewBox="0 0 20 20"><circle cx="10" cy="10" r="9" fill="#fff" stroke="#8c8c8c" stroke-width="1.1"/><circle cx="10" cy="10" r="3.2" fill="#0f9447"/></svg>
<div class="t" style="left:860.3px;top:773px;font-size:16.75px;color:#404040;font-weight:400;">Соответствует единице хранения "шт"</div>
<div class="t" style="left:833.5px;top:799px;font-size:16.6px;color:#8a7a5c;font-weight:400;">Рекомендуемый вариант ведения учета для оптовых продаж, если минимальной единицей закупки</div>
<div class="t" style="left:833.5px;top:818px;font-size:16.75px;color:#8a7a5c;font-weight:400;">является потребительская упаковка.</div>
<div class="t" style="left:833.5px;top:837px;font-size:16.6px;color:#8a7a5c;font-weight:400;">Розничная продажа пива на разлив оформляется отдельной номенклатурой после разупаковки и</div>
<div class="t" style="left:833.5px;top:856px;font-size:16.8px;color:#8a7a5c;font-weight:400;">передачи в торговый зал.</div>
<svg class="i" style="left:833.4px;top:888.5px" width="20" height="20" viewBox="0 0 20 20"><circle cx="10" cy="10" r="9" fill="#fff" stroke="#8c8c8c" stroke-width="1.1"/></svg>
<div class="t" style="left:860.3px;top:891px;font-size:16.75px;color:#404040;font-weight:400;">Соответствует упаковке номенклатуры:</div>
<div class="b" style="left:1181px;top:884px;width:165px;height:31px;border:1px solid #cfcfcf;border-bottom:none;border-radius:3px 3px 0 0;background:#fff;box-sizing:border-box"></div>
<div class="b" style="left:1319px;top:885px;width:1px;height:30px;background:#cfcfcf"></div>
<div class="t" style="left:1326.5px;top:893px;font-size:14px;color:#777;font-weight:400;">...</div>
<div class="t" style="left:807.5px;top:926px;font-size:20.3px;color:#009a46;font-weight:400;letter-spacing:-0.28px">Продажа пива на разлив</div>
<svg class="i" style="left:833px;top:951px" width="20" height="20" viewBox="0 0 20 20"><circle cx="10" cy="10" r="9" fill="#fff" stroke="#8c8c8c" stroke-width="1.1"/></svg>
<div class="t" style="left:860.2px;top:954px;font-size:16.6px;color:#404040;font-weight:400;">Не используется</div>
<svg class="i" style="left:833px;top:987px" width="20" height="20" viewBox="0 0 20 20"><circle cx="10" cy="10" r="9" fill="#fff" stroke="#8c8c8c" stroke-width="1.1"/><circle cx="10" cy="10" r="3.2" fill="#0f9447"/></svg>
<div class="t" style="left:860.2px;top:990px;font-size:16.6px;color:#404040;font-weight:400;">Применяется разупаковка с передачей в торговый зал.</div>
<div class="t" style="left:1301.3px;top:990px;font-size:16.6px;color:#404040;font-weight:400;">Емкость кега:</div>
<div class="b" style="left:1412px;top:983px;width:165px;height:29px;border:1px solid #a3a3a3;border-radius:3px;background:#fff;box-sizing:border-box"></div>
<div class="b" style="left:1550.5px;top:984px;width:1.0px;height:27px;background:#a3a3a3"></div>
<svg class="i" style="left:1557.75px;top:990.5px" width="12" height="14" viewBox="0 0 12 14"><rect x="0.5" y="0.5" width="11" height="13" rx="1" fill="none" stroke="#444"/><rect x="2" y="2" width="8" height="3" fill="#444"/><g fill="#444"><rect x="2" y="6.5" width="2" height="2"/><rect x="5" y="6.5" width="2" height="2"/><rect x="8" y="6.5" width="2" height="2"/><rect x="2" y="9.5" width="2" height="2"/><rect x="5" y="9.5" width="2" height="2"/><rect x="8" y="9.5" width="2" height="2"/></g></svg>
<div class="t" style="right:94.5px;top:990px;font-size:16.6px;color:#1e1e1e">30,000</div>
<div class="t" style="left:1583px;top:990px;font-size:16.6px;color:#8a7a5c;font-weight:400;">л.</div>
<div class="t" style="left:833.3px;top:1020px;font-size:16.81px;color:#8a7a5c;font-weight:400;">Для учета пива, продаваемого на разлив используется отдельная номенклатура с единицей</div>
<div class="t" style="left:833.3px;top:1039px;font-size:16.98px;color:#8a7a5c;font-weight:400;">хранения остатков соответствующей одному литру.</div>
<div class="t" style="left:833.3px;top:1058px;font-size:16.77px;color:#8a7a5c;font-weight:400;">При передаче в торговый зал используется документ "Сборка товаров" для пересчета кега в литры.</div>
<div class="t" style="left:833px;top:1091px;font-size:16.4px;color:#404040;font-weight:400;">Номенклатура:</div>
<div class="b" style="left:966.5px;top:1086px;width:512.5px;height:29px;border:1px solid #a3a3a3;border-radius:3px;background:#fff;box-sizing:border-box"></div>
<div class="b" style="left:1426.5px;top:1087px;width:1.0px;height:27px;background:#a3a3a3"></div>
<div class="b" style="left:1452.5px;top:1087px;width:1.0px;height:27px;background:#a3a3a3"></div>
<svg class="i" style="left:1436.0px;top:1098.5px" width="7" height="4" viewBox="0 0 7 4"><path d="M0 0h7L3.5 4z" fill="#444"/></svg>
<svg class="i" style="left:1459.75px;top:1094.5px" width="13" height="13" viewBox="0 0 13 13"><path d="M4.5 4.5h8v-8" fill="none"/><rect x="4.5" y="0.5" width="8" height="8" fill="none" stroke="#333"/><path d="M4.5 4.5H0.5v8h8V8.5" fill="none" stroke="#333"/></svg>
<div class="t" style="left:970.5px;top:1093px;font-size:16.6px;color:#1e1e1e;font-weight:400;">Пиво маркируемое в розлив</div>
<div class="t" style="left:833px;top:1131px;font-size:16.4px;color:#404040;font-weight:400;">Характеристика:</div>
<div class="b" style="left:966.5px;top:1126px;width:512.5px;height:29px;border:1px solid #c9c9c9;border-radius:3px;background:#fff;box-sizing:border-box"></div>
<div class="b" style="left:1452.5px;top:1127px;width:1.0px;height:27px;background:#c9c9c9"></div>
<svg class="i" style="left:1459.75px;top:1134.5px" width="13" height="13" viewBox="0 0 13 13"><path d="M4.5 4.5h8v-8" fill="none"/><rect x="4.5" y="0.5" width="8" height="8" fill="none" stroke="#333"/><path d="M4.5 4.5H0.5v8h8V8.5" fill="none" stroke="#333"/></svg>
<div class="t" style="left:970.5px;top:1133px;font-size:16.6px;color:#1e1e1e;font-weight:400;">&lt;характеристики не используются&gt;</div>
<div class="b" style="left:1174px;top:1170px;width:198px;height:34px;border:1px solid #c9ac00;background:linear-gradient(#ffec5c,#f6d900 60%,#efd000);box-shadow:0 1px 1px rgba(0,0,0,.25);border-radius:3px;box-sizing:border-box;"></div>
<div class="t" style="left:1191.5px;top:1179px;font-size:16.6px;color:#3d4150;font-weight:700;">Записать и закрыть</div>
<div class="b" style="left:1383px;top:1170px;width:98px;height:34px;border:1px solid #bdbdbd;background:linear-gradient(#ffffff 40%,#ececec);box-shadow:0 1px 1px rgba(0,0,0,.22);border-radius:3px;box-sizing:border-box;"></div>
<div class="t" style="left:1401px;top:1179px;font-size:16.6px;color:#404040;font-weight:400;">Закрыть</div>
<div class="b" style="left:1492px;top:1170px;width:75px;height:34px;border:1px solid #bdbdbd;background:linear-gradient(#ffffff 40%,#ececec);box-shadow:0 1px 1px rgba(0,0,0,.22);border-radius:3px;box-sizing:border-box;"></div>
<div class="t" style="left:1508px;top:1179px;font-size:16.6px;color:#404040;font-weight:400;">Еще</div>
<svg class="i" style="left:1551.5px;top:1185px" width="7" height="4" viewBox="0 0 7 4"><path d="M0 0h7L3.5 4z" fill="#444"/></svg>
<div class="b" style="left:1578px;top:1170px;width:38px;height:34px;border:1px solid #bdbdbd;background:linear-gradient(#ffffff 40%,#ececec);box-shadow:0 1px 1px rgba(0,0,0,.22);border-radius:3px;box-sizing:border-box;"></div>
<div class="t" style="left:1592px;top:1180px;font-size:17px;color:#222;font-weight:400;">?</div>
<svg class="i" style="left:1627.5px;top:754px" width="6" height="5" viewBox="0 0 6 5"><path d="M0 5h6L3 0z" fill="#c8c8c8"/></svg>
<div class="b" style="left:1625px;top:771px;width:10px;height:360px;background:#d6d6d6;border-radius:5px"></div>
<div class="b" style="left:1625px;top:771px;width:10px;height:311px;background:#9b9b9b;border-radius:5px"></div>
<svg class="i" style="left:1627.5px;top:1142.5px" width="6" height="5" viewBox="0 0 6 5"><path d="M0 0h6L3 5z" fill="#555"/></svg>
<div class="rb" style="left:2px;top:197px;width:311px;height:35px"></div>
<div class="rb" style="left:233px;top:275px;width:455px;height:36px"></div>
<div class="rb" style="left:225px;top:533px;width:651px;height:97px"></div>
<div class="rb" style="left:79px;top:851px;width:231px;height:34px"></div>
<div class="rb" style="left:517px;top:923px;width:276px;height:45px"></div>
<div class="rb" style="left:507px;top:1187px;width:286px;height:38px"></div>
<div class="rb" style="left:790px;top:910px;width:848px;height:295px"></div>
<svg class="i" style="left:0;top:0" width="1641" height="1438" viewBox="0 0 1641 1438"><defs><filter id="sh" x="-20%" y="-20%" width="140%" height="140%"><feGaussianBlur in="SourceAlpha" stdDeviation="2.5"/><feOffset dx="3" dy="3"/><feComponentTransfer><feFuncA type="linear" slope="0.55"/></feComponentTransfer><feMerge><feMergeNode/><feMergeNode in="SourceGraphic"/></feMerge></filter></defs><g filter="url(#sh)"><line x1="236" y1="231" x2="259.46" y2="258.87" stroke="#ff0000" stroke-width="3.8"/><polygon points="271.7,273.4 250.91,263.45 265.44,251.22" fill="#ff0000"/><line x1="309.6" y1="866.1" x2="500.90" y2="943.85" stroke="#ff0000" stroke-width="3.8"/><polygon points="518.5,951 495.47,951.89 502.62,934.29" fill="#ff0000"/><line x1="1115" y1="1237" x2="1083.71" y2="1215.69" stroke="#ff0000" stroke-width="3.8"/><polygon points="1068,1205 1090.71,1208.97 1080.01,1224.67" fill="#ff0000"/></g></svg>
</body></html>
